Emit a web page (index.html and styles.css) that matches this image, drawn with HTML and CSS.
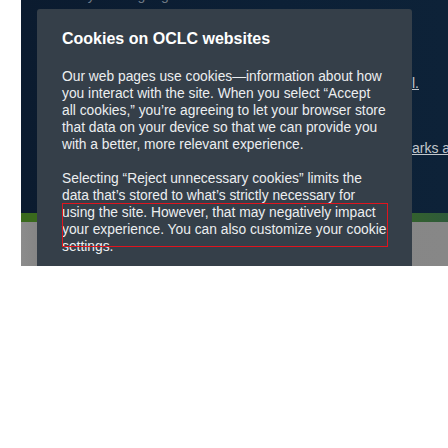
FILE: index.html
```html
<!DOCTYPE html>
<html lang="en">
<head>
<meta charset="utf-8">
<link rel="stylesheet" href="styles.css">
</head>
<body>
<div class="frame">
  <div class="page">
    <div class="navy">
      <p class="bg-top">in your language.</p>
      <p class="bg-link bg-link1"><span>l.</span></p>
      <p class="bg-link bg-link2"><span>arks and</span></p>
    </div>
    <div class="green"></div>
    <div class="gray"></div>
  </div>
  <div class="card">
    <h2 class="title">Cookies on OCLC websites</h2>
    <p class="text">Our web pages use cookies—information about how you interact with the site. When you select “Accept all cookies,” you’re agreeing to let your browser store that data on your device so that we can provide you with a better, more relevant experience.</p>
    <p class="text second">Selecting “Reject unnecessary cookies” limits the data that’s stored to what’s strictly necessary for using the site. However, that may negatively impact your experience. You can also customize your cookie settings.</p>
    <div class="highlight"></div>
  </div>
</div>
</body>
</html>
```

FILE: styles.css
```css
* { box-sizing: border-box; }
html, body { margin: 0; padding: 0; background: #ffffff; }
body { font-family: "Liberation Sans", Arial, sans-serif; }

.frame {
  position: relative;
  margin-left: 21px;
  width: 427px;
  height: 266px;
}
.page {
  display: flex;
  flex-direction: column;
  height: 100%;
}
.navy {
  position: relative;
  height: 213px;
  background: linear-gradient(90deg, #0b1b2f 0%, #0c2036 60%, #0d2238 100%);
  overflow: hidden;
}
.green {
  height: 9px;
  background: linear-gradient(90deg, #3a6a1d 0%, #3a6a1d 80%, #2e5a3a 100%);
}
.gray {
  flex: 1;
  background: linear-gradient(90deg, #8c8c8c 0%, #838383 5%, #878787 100%);
}
.bg-top {
  margin: 0;
  position: absolute;
  left: 52px;
  top: -13px;
  font-size: 14px;
  line-height: 17px;
  color: #6f7a86;
}
.bg-link {
  margin: 0;
  position: absolute;
  left: 391px;
  font-size: 14px;
  line-height: 17px;
  color: #c2c7cc;
  white-space: nowrap;
}
.bg-link span { text-decoration: underline; }
.bg-link1 { top: 75px; }
.bg-link2 { top: 140px; }

.card {
  position: absolute;
  left: 16px;
  top: 9px;
  width: 375px;
  bottom: 0;
  background: #353f49;
  border-radius: 3px 3px 0 0;
  padding: 20px 25px 0 25px;
  color: #eceef0;
  overflow: hidden;
}
.title {
  margin: 0 0 19px;
  font-size: 16px;
  font-weight: 700;
  line-height: 20px;
  color: #ffffff;
}
.text {
  margin: 0;
  font-size: 13.8px;
  line-height: 17px;
}
.second { margin-top: 17px; }
.highlight {
  position: absolute;
  left: 25px;
  top: 194px;
  width: 326px;
  height: 44px;
  border: 1px solid #e0141e;
}
```
